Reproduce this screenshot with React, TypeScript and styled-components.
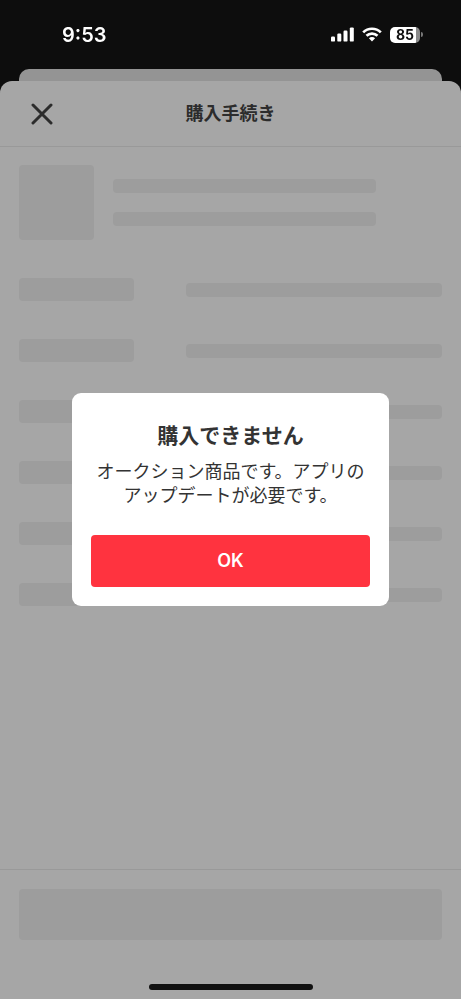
import React from "react";
import styled, { createGlobalStyle } from "styled-components";

const GlobalStyle = createGlobalStyle`
  *, *::before, *::after { box-sizing: border-box; }
  body {
    margin: 0;
    background: #141414;
    color: #333;
    font-family: Inter, "Noto Sans CJK JP", sans-serif;
  }
  h1, h2, p { margin: 0; }
`;

const Screen = styled.div`
  display: flex;
  flex-direction: column;
  min-height: 100vh;
  background: #141414;
`;

const StatusBar = styled.header`
  position: relative;
  z-index: 2;
  display: flex;
  align-items: center;
  justify-content: space-between;
  height: 69px;
  padding: 0 38px 0 62px;
  color: #fff;
`;

const Time = styled.time`
  font-size: 20px;
  font-weight: 600;
  line-height: 24px;
`;

const StatusIcons = styled.div`
  display: flex;
  align-items: center;
  gap: 8px;

  svg { display: block; }
`;

const Battery = styled.div`
  display: flex;
  align-items: center;
  gap: 1px;
`;

const BatteryBody = styled.span`
  width: 30px;
  height: 16px;
  border-radius: 5px;
  background: linear-gradient(to right, #fff 85%, #8a8a8a 85%);
  color: #0d0d0d;
  font-size: 14px;
  font-weight: 700;
  line-height: 16px;
  text-align: center;
`;

const BatteryTip = styled.span`
  width: 2px;
  height: 5px;
  border-radius: 0 2px 2px 0;
  background: #777;
`;

const BackSheet = styled.div`
  height: 12px;
  margin: 0 19px;
  border-radius: 10px 10px 0 0;
  background: #e4e4e4;
`;

const Sheet = styled.main`
  flex: 1;
  display: flex;
  flex-direction: column;
  border-radius: 12px 12px 0 0;
  background: #fff;
`;

const SheetHeader = styled.div`
  display: grid;
  grid-template-columns: 48px 1fr 48px;
  align-items: center;
  height: 66px;
  padding: 1px 18px 0;
  border-bottom: 1px solid #ececec;
`;

const CloseButton = styled.button`
  display: grid;
  place-items: center;
  width: 48px;
  height: 48px;
  padding: 0;
  border: 0;
  background: none;
  color: #444;
`;

const SheetTitle = styled.h1`
  color: #444;
  font-size: 18px;
  font-weight: 700;
  line-height: 24px;
  text-align: center;
`;

const Content = styled.div`
  flex: 1;
  display: flex;
  flex-direction: column;
  gap: 38px;
  padding: 18px 19px;
`;

const Bone = styled.div<{ $height: number }>`
  height: ${({ $height }) => $height}px;
  border-radius: 4px;
  background: #f1f1f1;
`;

const Product = styled.div`
  display: grid;
  grid-template-columns: 75px 1fr;
  align-items: center;
  gap: 19px;
`;

const ProductLines = styled.div`
  display: grid;
  gap: 19px;
  padding-right: 66px;
`;

const Row = styled.div`
  display: grid;
  grid-template-columns: 115px 1fr;
  align-items: center;
  gap: 52px;
`;

const Footer = styled.footer`
  padding: 19px 19px 9px;
  border-top: 1px solid #ececec;
`;

const HomeIndicator = styled.div`
  position: relative;
  z-index: 2;
  width: 164px;
  height: 6px;
  margin: 44px auto 0;
  border-radius: 3px;
  background: #111;
`;

const Overlay = styled.div`
  position: fixed;
  inset: 0;
  z-index: 1;
  display: flex;
  align-items: center;
  justify-content: center;
  padding: 0 72px;
  background: rgba(0, 0, 0, 0.35);
`;

const Dialog = styled.section`
  width: 100%;
  max-width: 360px;
  padding: 29px 19px 19px;
  border-radius: 9px;
  background: #fff;
  text-align: center;
`;

const DialogTitle = styled.h2`
  font-size: 21px;
  font-weight: 700;
  line-height: 28px;
`;

const DialogText = styled.p`
  margin: 10px 0 27px;
  font-size: 18px;
  line-height: 24px;
`;

const OkButton = styled.button`
  display: block;
  width: 100%;
  height: 52px;
  border: 0;
  border-radius: 4px;
  background: #ff333f;
  color: #fff;
  font: 600 18px/24px Inter, sans-serif;
`;

const SignalIcon = () => (
  <svg width="23" height="15" viewBox="0 0 23 15" fill="#fff" aria-label="電波" role="img">
    <rect x="0" y="9.4" width="4" height="5.2" rx="1.2" />
    <rect x="6.3" y="6.6" width="4" height="8" rx="1.2" />
    <rect x="12.5" y="3.6" width="4" height="11" rx="1.2" />
    <rect x="18.8" y="0.4" width="4" height="14.2" rx="1.2" />
  </svg>
);

const WifiIcon = () => (
  <svg width="20" height="15" viewBox="0 0 20 15" fill="none" stroke="#fff" strokeWidth="2.7" aria-label="Wi-Fi" role="img">
    <path d="M1.2 5.4A12.4 12.4 0 0 1 18.8 5.4" />
    <path d="M4.5 8.8A7.8 7.8 0 0 1 15.5 8.8" />
    <path d="M10 14.4 6.9 11.3A4.4 4.4 0 0 1 13.1 11.3Z" fill="#fff" stroke="none" />
  </svg>
);

const CloseIcon = () => (
  <svg width="22" height="22" viewBox="0 0 22 22" fill="none" stroke="currentColor" strokeWidth="3" strokeLinecap="round" aria-hidden="true">
    <path d="M2 2 20 20M20 2 2 20" />
  </svg>
);

const detailRows = [1, 2, 3, 4, 5, 6];

export default function App() {
  return (
    <>
      <GlobalStyle />
      <Screen>
        <StatusBar>
          <Time>9:53</Time>
          <StatusIcons>
            <SignalIcon />
            <WifiIcon />
            <Battery>
              <BatteryBody>85</BatteryBody>
              <BatteryTip />
            </Battery>
          </StatusIcons>
        </StatusBar>
        <BackSheet />
        <Sheet>
          <SheetHeader>
            <CloseButton type="button" aria-label="閉じる">
              <CloseIcon />
            </CloseButton>
            <SheetTitle>購入手続き</SheetTitle>
          </SheetHeader>
          <Content>
            <Product>
              <Bone $height={75} />
              <ProductLines>
                <Bone $height={14} />
                <Bone $height={14} />
              </ProductLines>
            </Product>
            {detailRows.map((row) => (
              <Row key={row}>
                <Bone $height={23} />
                <Bone $height={14} />
              </Row>
            ))}
          </Content>
          <Footer>
            <Bone $height={51} />
            <HomeIndicator />
          </Footer>
        </Sheet>
        <Overlay>
          <Dialog role="alertdialog" aria-modal="true" aria-labelledby="dialog-title" aria-describedby="dialog-text">
            <DialogTitle id="dialog-title">購入できません</DialogTitle>
            <DialogText id="dialog-text">
              オークション商品です。アプリの
              <br />
              アップデートが必要です。
            </DialogText>
            <OkButton type="button">OK</OkButton>
          </Dialog>
        </Overlay>
      </Screen>
    </>
  );
}
